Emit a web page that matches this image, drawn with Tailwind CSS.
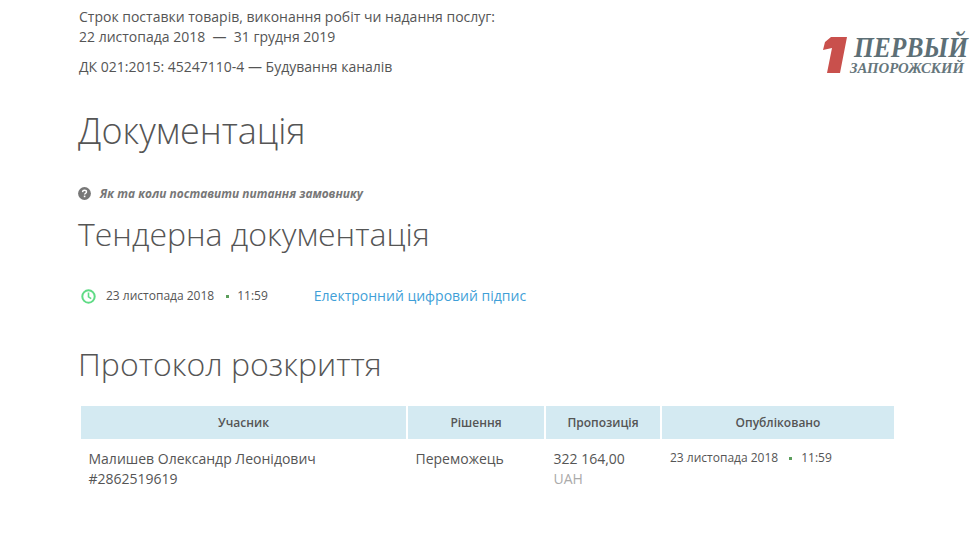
<!DOCTYPE html>
<html lang="en">
<head>
    <meta charset="UTF-8">
    <title>Документація</title>
    <script src="https://cdn.jsdelivr.net/npm/@tailwindcss/browser@4"></script>
</head>
<body class="bg-white font-['Open_Sans',sans-serif] text-[#555555] overflow-hidden h-[541px]">
    <div class="relative pl-[79px] pt-[7px]">
        <!-- logo -->
        <div class="absolute left-[822px] top-[33px] w-[150px] h-[42px]">
            <svg class="absolute left-0 top-[3px]" width="26" height="38" viewBox="0 0 26 38"><path d="M9 1H25L18 37H5L10 12L1 14L3 6Z" fill="#c9504c"/></svg>
            <div class="absolute left-[32px] top-[2px] origin-left scale-x-[0.85] font-['Liberation_Serif',serif] italic font-bold text-[30px] leading-[24px] text-[#5d6f76] whitespace-nowrap">ПЕРВЫЙ</div>
            <div class="absolute left-[28px] top-[28px] font-['Liberation_Serif',serif] italic font-bold text-[14.8px] leading-[14px] text-[#66767c] whitespace-nowrap">ЗАПОРОЖСКИЙ</div>
        </div>

        <p class="text-sm leading-[20px]">Строк поставки товарів, виконання робіт чи надання послуг:</p>
        <p class="text-sm leading-[20px] whitespace-pre">22 листопада 2018  —  31 грудня 2019</p>
        <p class="text-sm leading-[20px] mt-[10px]">ДК 021:2015: 45247110-4 — Будування каналів</p>

        <h1 class="font-light text-[36px] leading-[40px] mt-[34px] -ml-px">Документація</h1>

        <div class="flex items-center gap-[8px] mt-[33px] text-[#777777] -ml-px">
            <svg width="13" height="13" viewBox="0 0 13 13"><circle cx="6.5" cy="6.5" r="6.4" fill="#777777"/><path d="M4.5 5.1C4.6 3.9 5.4 3.3 6.5 3.3C7.7 3.3 8.5 4 8.5 5C8.5 6.2 6.6 6.3 6.6 7.6" fill="none" stroke="#fff" stroke-width="1.4"/><rect x="5.8" y="8.6" width="1.6" height="1.6" fill="#fff"/></svg>
            <a class="text-[11.9px] leading-[18px] font-bold italic ml-[1px]">Як та коли поставити питання замовнику</a>
        </div>

        <h2 class="font-light text-[32px] leading-[40px] mt-[12px] -ml-px">Тендерна документація</h2>

        <div class="flex items-center mt-[32px] h-[20px] pl-[2px]">
            <svg width="15" height="15" viewBox="0 0 15 15" fill="none" stroke="#5fdb85" stroke-width="2"><circle cx="7.5" cy="7.5" r="6.2"/><path d="M7.5 3.6V7.8L10.2 9.6" stroke-width="1.6"/></svg>
            <span class="text-xs ml-[10px]">23 листопада 2018</span>
            <span class="w-[3px] h-[3px] bg-[#5c9e5c] ml-[12px]"></span>
            <span class="text-xs ml-[8px]">11:59</span>
            <a class="text-sm text-[#3f9fd8] ml-[46px]">Електронний цифровий підпис</a>
        </div>

        <h2 class="font-light text-[32px] leading-[40px] mt-[38px] -ml-px">Протокол розкриття</h2>

        <table class="border-separate border-spacing-x-[2px] border-spacing-y-0 w-[817px] table-fixed mt-[22px]">
            <thead>
                <tr>
                    <th class="w-[325px] h-[33px] bg-[#d4eaf2] text-xs font-semibold">Учасник</th>
                    <th class="w-[136px] bg-[#d4eaf2] text-xs font-semibold">Рішення</th>
                    <th class="w-[114px] bg-[#d4eaf2] text-xs font-semibold">Пропозиція</th>
                    <th class="w-[232px] bg-[#d4eaf2] text-xs font-semibold">Опубліковано</th>
                </tr>
            </thead>
            <tbody>
                <tr class="align-top">
                    <td class="pl-[7.5px] pr-[8px] pt-[10px] text-sm leading-[20px]">Малишев Олександр Леонідович<br>#2862519619</td>
                    <td class="pl-[7.5px] pr-[8px] pt-[10px] text-sm leading-[20px]">Переможець</td>
                    <td class="pl-[7.5px] pr-[8px] pt-[10px] text-sm leading-[20px]">322 164,00<br><span class="text-[#aaaaaa]">UAH</span></td>
                    <td class="pl-[8px] pr-[8px] pt-[9px] text-xs leading-[20px]">
                        <div class="flex items-center">
                            <span>23 листопада 2018</span>
                            <span class="w-[3px] h-[3px] bg-[#5c9e5c] ml-[11px]"></span>
                            <span class="ml-[9px]">11:59</span>
                        </div>
                    </td>
                </tr>
            </tbody>
        </table>
    </div>
</body>
</html>
